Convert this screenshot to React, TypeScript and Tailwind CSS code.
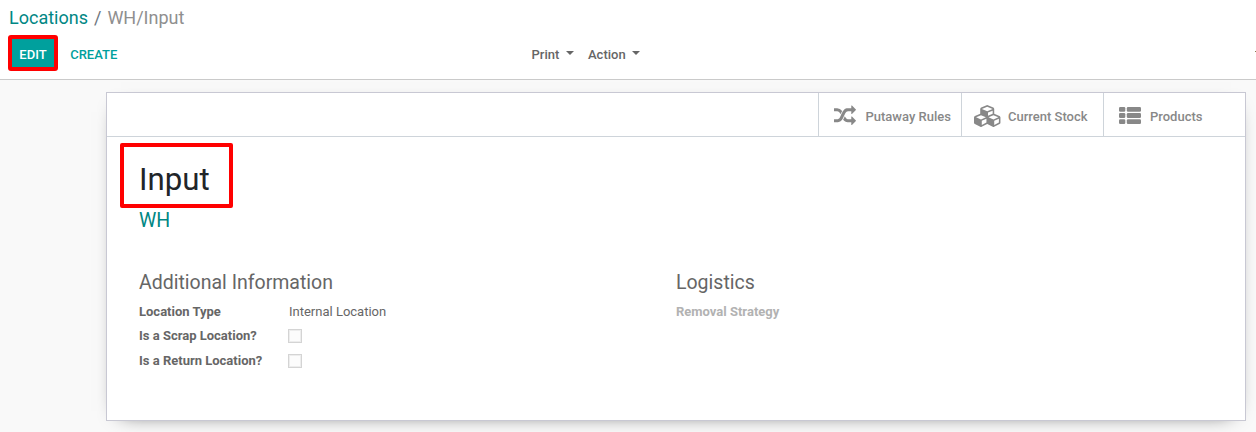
import type { ReactNode } from "react";

function RandomIcon() {
  return (
    <svg viewBox="0 0 1792 1792" className="size-[22px] fill-current">
      <path d="M666 481q-60 92-137 273-22-45-37-72.5t-40.5-63.5-51-56.5-63-35-81.5-14.5h-224q-14 0-23-9t-9-23v-192q0-14 9-23t23-9h224q250 0 410 225zm1126 799q0 14-9 23l-320 320q-9 9-23 9-13 0-22.5-9.5t-9.5-22.5v-192q-32 0-85 .5t-81 1-73-1-71-5-64-10.5-63-18.5-58-28.5-59-40-55-53.5-56-69.5q59-93 136-273 22 45 37 72.5t40.5 63.5 51 56.5 63 35 81.5 14.5h256v-192q0-14 9-23t23-9q12 0 24 10l319 319q9 9 9 23zm0-896q0 14-9 23l-320 320q-9 9-23 9-13 0-22.5-9.5t-9.5-22.5v-192h-256q-48 0-87 15t-69 45-51 61.5-45 77.5q-32 62-78 171-29 66-49.5 111t-54 105-64 100-74 83-90 68.5-106.5 42-128 16.5h-224q-14 0-23-9t-9-23v-192q0-14 9-23t23-9h224q48 0 87-15t69-45 51-61.5 45-77.5q32-62 78-171 29-66 49.5-111t54-105 64-100 74-83 90-68.5 106.5-42 128-16.5h256v-192q0-14 9-23t23-9q12 0 24 10l319 319q9 9 9 23z" />
    </svg>
  );
}

function CubesIcon() {
  return (
    <svg viewBox="0 0 2304 1792" className="h-[22px] w-[28px] shrink-0 fill-current">
      <path d="M640 1632l384-192v-314l-384 164v342zm-64-454l404-173-404-173-404 173zm1088 454l384-192v-314l-384 164v342zm-64-454l404-173-404-173-404 173zm-448-293l384-165v-266l-384 164v267zm-64-379l441-189-441-189-441 189zm1088 518v416q0 36-19 67t-52 47l-448 224q-25 14-57 14t-57-14l-448-224q-4-2-7-4-2 2-7 4l-448 224q-25 14-57 14t-57-14l-448-224q-33-16-52-47t-19-67v-416q0-38 21.5-70t56.5-48l434-186v-400q0-38 21.5-70t56.5-48l448-192q23-10 50-10t50 10l448 192q35 16 56.5 48t21.5 70v400l434 186q36 16 57 48t21 70z" />
    </svg>
  );
}

function ListIcon() {
  return (
    <svg viewBox="0 0 22 22" className="size-[22px] fill-current">
      <rect x="0" y="2" width="6.3" height="4.7" rx="1.2" />
      <rect x="7.8" y="2" width="14.2" height="4.7" rx="1.2" />
      <rect x="0" y="8.1" width="6.3" height="4.8" rx="1.2" />
      <rect x="7.8" y="8.1" width="14.2" height="4.8" rx="1.2" />
      <rect x="0" y="14.3" width="6.3" height="4.7" rx="1.2" />
      <rect x="7.8" y="14.3" width="14.2" height="4.7" rx="1.2" />
    </svg>
  );
}

function Caret() {
  return (
    <svg viewBox="0 0 8 4" className="mb-[3px] ml-[6.5px] h-1 w-2 fill-current">
      <path d="M0 0h8L4 4z" />
    </svg>
  );
}

function StatButton({ icon, label }: { icon: ReactNode; label: string }) {
  return (
    <button className="group flex h-full w-[142px] items-center border-l border-[#ced4da] pl-[11px] pt-[2px] text-[13px] font-medium text-[#888] first:w-[143px]">
      <span className="flex w-[30px] justify-center">{icon}</span>
      <span className="ml-[5px] whitespace-nowrap pt-[3px] group-first:ml-[5.5px]">{label}</span>
    </button>
  );
}

function Checkbox() {
  return <span className="ml-[-1px] block size-[14px] border border-[#d4d4d4] bg-[#fcfcfc] shadow-[inset_0_0_0_1px_#ededed]" />;
}

export default function App() {
  return (
    <div className="flex h-[432px] w-[1256px] flex-col overflow-hidden bg-[#f9f9f9] font-[Roboto,sans-serif] text-[13px] leading-[20px] text-[#666]">
      <header className="relative h-[80px] shrink-0 border-b border-[#cacaca] bg-white">
        <nav className="flex h-[35px] items-center pl-[9px] text-[18px] leading-[27px]">
          <span className="text-[#008784]">Locations</span>
          <span className="px-[6px] text-[#6c757d]">/</span>
          <span className="text-[#8f8f8f]">WH/Input</span>
        </nav>
        <div className="flex h-[36px] items-center pl-2 font-medium">
          <button className="h-[36px] w-[50px] rounded-[3px] border-4 border-[#f00] bg-[#00a09d] pt-[3px] text-white">EDIT</button>
          <button className="ml-[12.2px] w-[48.3px] pt-[3px] text-left text-[#00a09d]">CREATE</button>
          <button className="ml-[413px] flex w-[56.5px] items-center pt-[3px]">Print<Caret /></button>
          <button className="flex items-center pt-[3px]">Action<Caret /></button>
        </div>
        <span className="absolute right-0 top-[51px] h-px w-px bg-[#8a7c50]" />
      </header>
      <main className="pl-[106px] pt-3">
        <section className="h-[329px] w-[1140px] border border-[#c8c8d3] bg-white shadow-[0_5px_20px_-15px_#000]">
          <div className="flex h-[44px] justify-end border-b border-[#ced4da]">
            <StatButton icon={<RandomIcon />} label="Putaway Rules" />
            <StatButton icon={<CubesIcon />} label="Current Stock" />
            <StatButton icon={<ListIcon />} label="Products" />
          </div>
          <div className="pl-[13px] pt-[6px]">
            <h1 className="flex h-[65px] w-[113px] items-center rounded-[2px] border-4 border-[#f00] pl-[15px] pt-[9px] text-[31.2px] leading-[40px] text-[#212529]">Input</h1>
            <h2 className="pl-[19px] pt-px text-[19.5px] leading-6 text-[#008784]">WH</h2>
          </div>
          <div className="mt-[38px] flex pl-8">
            <div className="w-[537px]">
              <h3 className="mb-[5px] text-[19.5px] leading-[24px]">Additional Information</h3>
              <dl className="grid grid-cols-[150px_1fr] grid-rows-[23px_25px_25px] items-center">
                <dt className="font-bold">Location Type</dt><dd>Internal Location</dd>
                <dt className="font-bold">Is a Scrap Location?</dt><dd><Checkbox /></dd>
                <dt className="font-bold">Is a Return Location?</dt><dd><Checkbox /></dd>
              </dl>
            </div>
            <div>
              <h3 className="mb-[5px] text-[19.5px] leading-[24px]">Logistics</h3>
              <p className="font-bold leading-[23px] text-[#b2b2b2]">Removal Strategy</p>
            </div>
          </div>
        </section>
      </main>
    </div>
  );
}
